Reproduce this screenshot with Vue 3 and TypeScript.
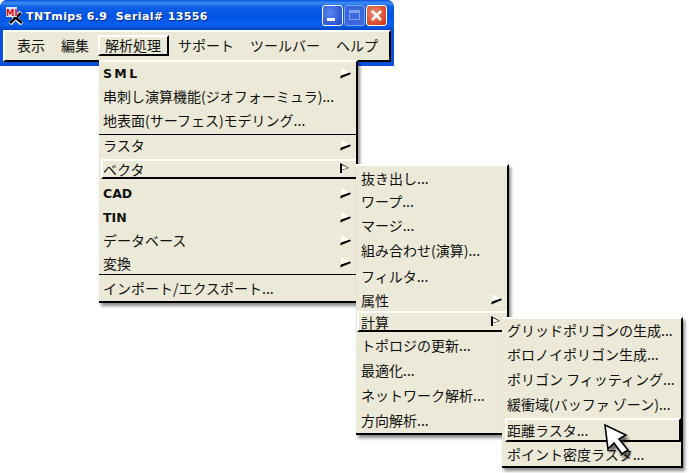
<script setup lang="ts">
interface MenuRow {
  label: string
  h: number
  pt?: number
  pb?: number
  bold?: boolean
  sub?: boolean
  active?: boolean
  sep?: boolean
}

const topMenus = ['表示', '編集', '解析処理', 'サポート', 'ツールバー', 'ヘルプ']

const mainRows: MenuRow[] = [
  { label: 'S M L', h: 22, bold: true, sub: true },
  { label: '串刺し演算機能(ジオフォーミュラ)...', h: 24 },
  { label: '地表面(サーフェス)モデリング...', h: 27, pb: 2, sep: true },
  { label: 'ラスタ', h: 24, pb: 4, sub: true },
  { label: 'ベクタ', h: 20, pb: 1, sub: true, active: true },
  { label: 'CAD', h: 26, pt: 2, bold: true, sub: true },
  { label: 'TIN', h: 24, bold: true, sub: true },
  { label: 'データベース', h: 22, sub: true },
  { label: '変換', h: 24, sub: true, sep: true },
  { label: 'インポート/エクスポート...', h: 26 },
]

const vectorRows: MenuRow[] = [
  { label: '抜き出し...', h: 23 },
  { label: 'ワープ...', h: 24 },
  { label: 'マージ...', h: 24 },
  { label: '組み合わせ(演算)...', h: 26 },
  { label: 'フィルタ...', h: 25 },
  { label: '属性', h: 23, sub: true },
  { label: '計算', h: 21, sub: true, active: true },
  { label: 'トポロジの更新...', h: 26 },
  { label: '最適化...', h: 24 },
  { label: 'ネットワーク解析...', h: 26 },
  { label: '方向解析...', h: 25, pb: 1 },
]

const calcRows: MenuRow[] = [
  { label: 'グリッドポリゴンの生成...', h: 23, pb: 2 },
  { label: 'ボロノイポリゴン生成...', h: 25, pb: 1 },
  { label: 'ポリゴン フィッティング...', h: 25, pb: 1 },
  { label: '緩衝域(バッファ ゾーン)...', h: 26, pb: 2 },
  { label: '距離ラスタ...', h: 24, pb: 1, active: true },
  { label: 'ポイント密度ラスタ...', h: 24 },
]

const menus = [
  { key: 'main', rows: mainRows },
  { key: 'vector', rows: vectorRows },
  { key: 'calc', rows: calcRows },
]

function rowStyle(row: MenuRow) {
  return {
    height: row.h + 'px',
    paddingTop: (row.pt ?? 0) + 'px',
    paddingBottom: (row.pb ?? 0) + 'px',
  }
}
</script>

<template>
  <div class="desktop">
    <section class="window">
      <header class="titlebar">
        <svg class="app-icon" width="18" height="18" viewBox="0 0 18 18">
          <path d="M3 5 L16 17 M15 5 L4 17" stroke="#fff" stroke-width="4" />
          <path d="M4 6 L16 16 M15 6 L4 16" stroke="#000" stroke-width="2.4" />
          <rect x="0" y="0" width="11" height="10" fill="#fff" opacity="0.85" />
          <text x="0" y="8.5" class="icon-text">MI</text>
        </svg>
        <span class="title">TNTmips 6.9&nbsp;&nbsp;Serial# 13556</span>
        <div class="controls">
          <button class="ctl"><span class="min-bar"></span></button>
          <button class="ctl off"><span class="max-box"></span></button>
          <button class="ctl close">
            <svg width="13" height="13" viewBox="0 0 13 13">
              <path d="M2 2 L11 11 M11 2 L2 11" stroke="#fff" stroke-width="2.6" />
            </svg>
          </button>
        </div>
      </header>
      <nav class="menubar">
        <span v-for="m in topMenus" :key="m" class="top-item" :class="{ open: m === '解析処理' }">{{ m }}</span>
      </nav>
    </section>

    <div v-for="menu in menus" :key="menu.key" class="menu" :class="menu.key">
      <div
        v-for="row in menu.rows"
        :key="row.label"
        class="row"
        :class="{ active: row.active, bold: row.bold, sep: row.sep }"
        :style="rowStyle(row)"
      >
        <span>{{ row.label }}</span>
        <svg v-if="row.sub" class="arrow" width="13" height="11" viewBox="0 0 13 11">
          <template v-if="row.active">
            <path d="M1 0 L1 10 L3 10 L3 7 L10 5 L3 1 Z" fill="#000" />
            <path d="M3 2 L9 5 L3 6.5 Z" fill="#fff" />
          </template>
          <template v-else>
            <path d="M2 0 L11 5 L2 8 Z" fill="#fff" />
            <path d="M1 10.5 L12 6 L11 4.6 L2 7.6 Z" fill="#000" />
          </template>
        </svg>
      </div>
    </div>

    <svg class="pointer" width="34" height="40" viewBox="0 0 34 40">
      <defs>
        <filter id="soft" x="-30%" y="-30%" width="160%" height="160%">
          <feGaussianBlur stdDeviation="1.6" />
        </filter>
      </defs>
      <path
        d="M5 5 L27 16 L20 20 L28 31 L22 36 L14 25 L7 30 Z"
        fill="#000"
        opacity="0.55"
        filter="url(#soft)"
      />
      <path
        d="M2 2 L23 12 L16 16 L25 27 L19 31 L11 20 L5 26 Z"
        fill="#fff"
        stroke="#000"
        stroke-width="1.6"
      />
    </svg>
  </div>
</template>

<style scoped>
.desktop {
  position: relative;
  width: 689px;
  height: 473px;
  overflow: hidden;
  background: #fff;
  font-family: "Noto Sans CJK JP", "DejaVu Sans", sans-serif;
  font-size: 14px;
  color: #111;
}

.window {
  width: 394px;
  height: 66px;
  box-sizing: border-box;
  padding: 0 3px 4px;
  display: flex;
  flex-direction: column;
  background: #0a4fd8;
  border-radius: 7px 7px 0 0;
}

.titlebar {
  height: 30px;
  flex: none;
  margin: 0 -3px;
  padding: 2px 7px 0 6px;
  box-sizing: border-box;
  display: flex;
  align-items: center;
  border-radius: 7px 7px 0 0;
  background: linear-gradient(180deg, #0a52e0 0%, #3e8ff5 10%, #0f5fe6 22%, #0054e3 55%, #0a5fee 82%, #0046c8 100%);
}

.app-icon {
  flex: none;
  margin-right: 2px;
}

.icon-text {
  font-family: "DejaVu Sans", sans-serif;
  font-weight: 700;
  font-size: 8.5px;
  fill: #d8101c;
}

.title {
  font-family: "DejaVu Sans", sans-serif;
  font-weight: 700;
  font-size: 11px;
  letter-spacing: 0.38px;
  white-space: pre;
  color: #fff;
  text-shadow: 1px 1px 0 #0a2c88;
}

.controls {
  margin-left: auto;
  display: flex;
  gap: 1px;
  margin-top: -2px;
}

.ctl {
  position: relative;
  width: 21px;
  height: 21px;
  padding: 0;
  border: 1px solid #fff;
  border-radius: 3px;
  background: radial-gradient(circle at 35% 35%, #5a86ee, #2a55d4 75%, #1f44b8);
  display: flex;
  align-items: center;
  justify-content: center;
}

.ctl.off {
  border-color: #7da2ee;
  background: #3a68dc;
}

.ctl.close {
  background: radial-gradient(circle at 35% 35%, #ec8a6c, #d8492a 70%, #b53312);
}

.min-bar {
  width: 8px;
  height: 3px;
  margin-top: 9px;
  margin-right: 3px;
  background: #fff;
}

.max-box {
  width: 11px;
  height: 10px;
  box-sizing: border-box;
  border: 1px solid #7da2ee;
  border-top-width: 3px;
}

.menubar {
  flex: 1;
  display: flex;
  align-items: center;
  gap: 16px;
  padding: 0 0 1px 12px;
  background: #ece9d8;
  border-top: 2px solid #fff;
  border-left: 2px solid #fff;
  border-right: 2px solid #000;
  border-bottom: 2px solid #000;
}

.top-item {
  height: 21px;
  line-height: 21px;
  box-sizing: border-box;
  white-space: nowrap;
}

.top-item.open {
  padding: 0 6px 0 5px;
  margin: 0 -7px;
  line-height: 17px;
  border-top: 2px solid #fff;
  border-left: 2px solid #fff;
  border-right: 2px solid #000;
  border-bottom: 2px solid #000;
}

.menu {
  position: absolute;
  box-sizing: border-box;
  background: #ece9d8;
  border-top: 2px solid #fff;
  border-right: 2px solid #000;
  border-bottom: 2px solid #000;
  box-shadow: 2px 3px 3px rgba(0, 0, 0, 0.45);
}

.menu.main {
  left: 99px;
  top: 60px;
  width: 259px;
}

.menu.vector {
  left: 356px;
  top: 164px;
  width: 153px;
}

.menu.calc {
  left: 502px;
  top: 317px;
  width: 181px;
}

.row {
  position: relative;
  box-sizing: border-box;
  display: flex;
  align-items: center;
  justify-content: space-between;
  padding-left: 4px;
  padding-right: 4px;
  white-space: nowrap;
}

.vector .row,
.calc .row {
  padding-left: 5px;
}

.row.bold {
  font-family: "DejaVu Sans", sans-serif;
  font-weight: 700;
  font-size: 12.5px;
  word-spacing: -2px;
}

.row.sep {
  border-bottom: 1px solid #000;
}

.row.active {
  margin-left: 2px;
  border-top: 2px solid #fff;
  border-left: 2px solid #fff;
  border-bottom: 2px solid #000;
  padding-left: 0;
}

.vector .row.active {
  margin-left: 1px;
  padding-left: 2px;
}

.calc .row.active {
  margin-left: 3px;
  padding-left: 0;
  border-right: 2px solid #000;
}

.arrow {
  flex: none;
}

.pointer {
  position: absolute;
  left: 603px;
  top: 423px;
}
</style>
